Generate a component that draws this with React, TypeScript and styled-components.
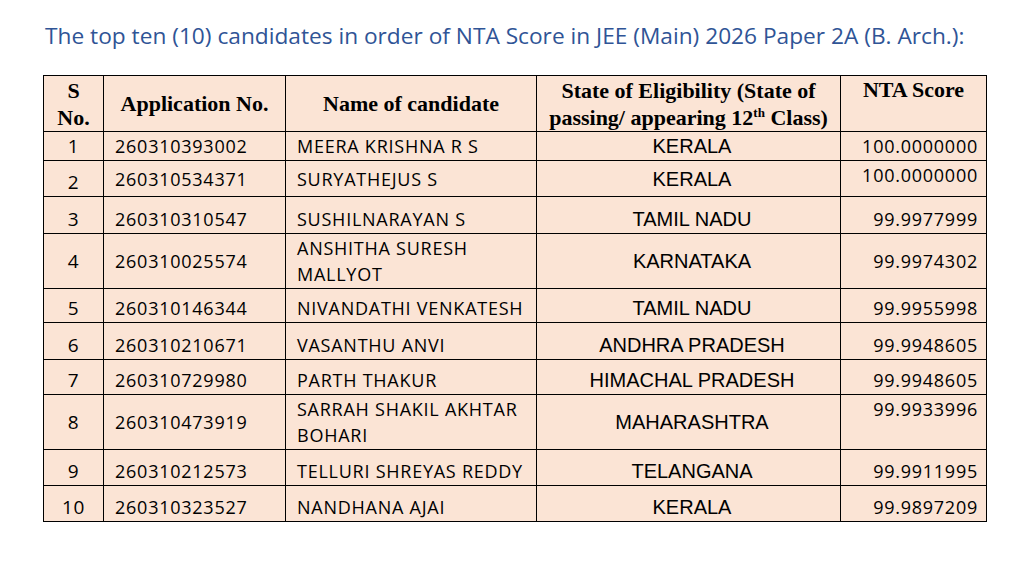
import React from "react";
import styled, { createGlobalStyle } from "styled-components";

const Global = createGlobalStyle`
  html, body { margin: 0; padding: 0; background: #ffffff; }
  body { width: 1015px; height: 571px; overflow: hidden; }
`;

const Page = styled.div`
  padding: 20px 0 0 43px;
  display: flex;
  flex-direction: column;
`;

const Title = styled.h1`
  margin: 0 0 0 2px;
  font-family: "Open Sans", "Liberation Sans", sans-serif;
  font-weight: 400;
  font-size: 22.7px;
  line-height: 32px;
  color: #2f5496;
  white-space: nowrap;
`;

const Table = styled.table`
  margin-top: 23px;
  width: 943px;
  table-layout: fixed;
  border-collapse: collapse;
  background: #fbe4d5;
  border: 1px solid #000;
`;

const HeadCell = styled.th<{ $valign?: string }>`
  border: 1px solid #000;
  padding: 0 3px;
  font-family: "Liberation Serif", "Times New Roman", serif;
  font-weight: 700;
  font-size: 22px;
  line-height: 27px;
  color: #000;
  text-align: center;
  vertical-align: ${(p) => p.$valign || "middle"};
  sup { font-size: 13px; line-height: 0; vertical-align: 8px; }
`;

const Row = styled.tr<{ $h: number }>`
  height: ${(p) => p.$h}px;
`;

type Kind = "sno" | "app" | "name" | "state" | "score";

const Cell = styled.td<{ $kind: Kind; $valign: string }>`
  border: 1px solid #000;
  padding: ${(p) =>
    p.$kind === "score" ? "0 8px 0 4px" : p.$kind === "sno" ? "0 2px" : "0 4px 0 11px"};
  padding-bottom: 1px;
  padding-top: 1px;
  font-family: ${(p) =>
    p.$kind === "state"
      ? `"Liberation Sans", Arial, sans-serif`
      : `"Open Sans", "Liberation Sans", sans-serif`};
  font-size: ${(p) => (p.$kind === "state" ? "20px" : p.$kind === "sno" ? "19px" : "18px")};
  letter-spacing: ${(p) => (p.$kind === "state" ? "0" : "0.75px")};
  line-height: 26px;
  color: #000;
  text-align: ${(p) =>
    p.$kind === "score" ? "right" : p.$kind === "state" || p.$kind === "sno" ? "center" : "left"};
  vertical-align: ${(p) => p.$valign};
  white-space: ${(p) => (p.$kind === "name" ? "normal" : "nowrap")};
`;

type V = "top" | "middle" | "bottom";
type RowData = {
  h: number;
  cells: [string, string, string, string, string];
  v: [V, V, V, V, V];
};

const B: [V, V, V, V, V] = ["bottom", "bottom", "bottom", "bottom", "bottom"];

const rows: RowData[] = [
  { h: 28, cells: ["1", "260310393002", "MEERA KRISHNA R S", "KERALA", "100.0000000"], v: ["middle", "middle", "middle", "middle", "middle"] },
  { h: 36, cells: ["2", "260310534371", "SURYATHEJUS S", "KERALA", "100.0000000"], v: ["bottom", "middle", "middle", "middle", "top"] },
  { h: 37, cells: ["3", "260310310547", "SUSHILNARAYAN S", "TAMIL NADU", "99.9977999"], v: B },
  { h: 55, cells: ["4", "260310025574", "ANSHITHA SURESH MALLYOT", "KARNATAKA", "99.9974302"], v: ["middle", "middle", "middle", "middle", "middle"] },
  { h: 34, cells: ["5", "260310146344", "NIVANDATHI VENKATESH", "TAMIL NADU", "99.9955998"], v: B },
  { h: 37, cells: ["6", "260310210671", "VASANTHU ANVI", "ANDHRA PRADESH", "99.9948605"], v: B },
  { h: 35, cells: ["7", "260310729980", "PARTH THAKUR", "HIMACHAL PRADESH", "99.9948605"], v: B },
  { h: 54, cells: ["8", "260310473919", "SARRAH SHAKIL AKHTAR BOHARI", "MAHARASHTRA", "99.9933996"], v: ["middle", "middle", "middle", "middle", "top"] },
  { h: 36, cells: ["9", "260310212573", "TELLURI SHREYAS REDDY", "TELANGANA", "99.9911995"], v: B },
  { h: 36, cells: ["10", "260310323527", "NANDHANA AJAI", "KERALA", "99.9897209"], v: B },
];

const kinds: Kind[] = ["sno", "app", "name", "state", "score"];
const widths = [60, 182, 251, 304, 146];

export default function App() {
  return (
    <>
      <Global />
      <Page>
        <Title>
          The top ten (10) candidates in order of NTA Score in JEE (Main) 2026 Paper 2A (B. Arch.):
        </Title>
        <Table>
          <colgroup>
            {widths.map((w, i) => (
              <col key={i} style={{ width: w }} />
            ))}
          </colgroup>
          <thead>
            <Row $h={56}>
              <HeadCell>
                S<br />
                No.
              </HeadCell>
              <HeadCell>Application No.</HeadCell>
              <HeadCell>Name of candidate</HeadCell>
              <HeadCell>
                State of Eligibility (State of passing/ appearing 12<sup>th</sup> Class)
              </HeadCell>
              <HeadCell $valign="top">NTA Score</HeadCell>
            </Row>
          </thead>
          <tbody>
            {rows.map((r, i) => (
              <Row key={i} $h={r.h}>
                {r.cells.map((c, j) => (
                  <Cell key={j} $kind={kinds[j]} $valign={r.v[j]}>
                    {c}
                  </Cell>
                ))}
              </Row>
            ))}
          </tbody>
        </Table>
      </Page>
    </>
  );
}
